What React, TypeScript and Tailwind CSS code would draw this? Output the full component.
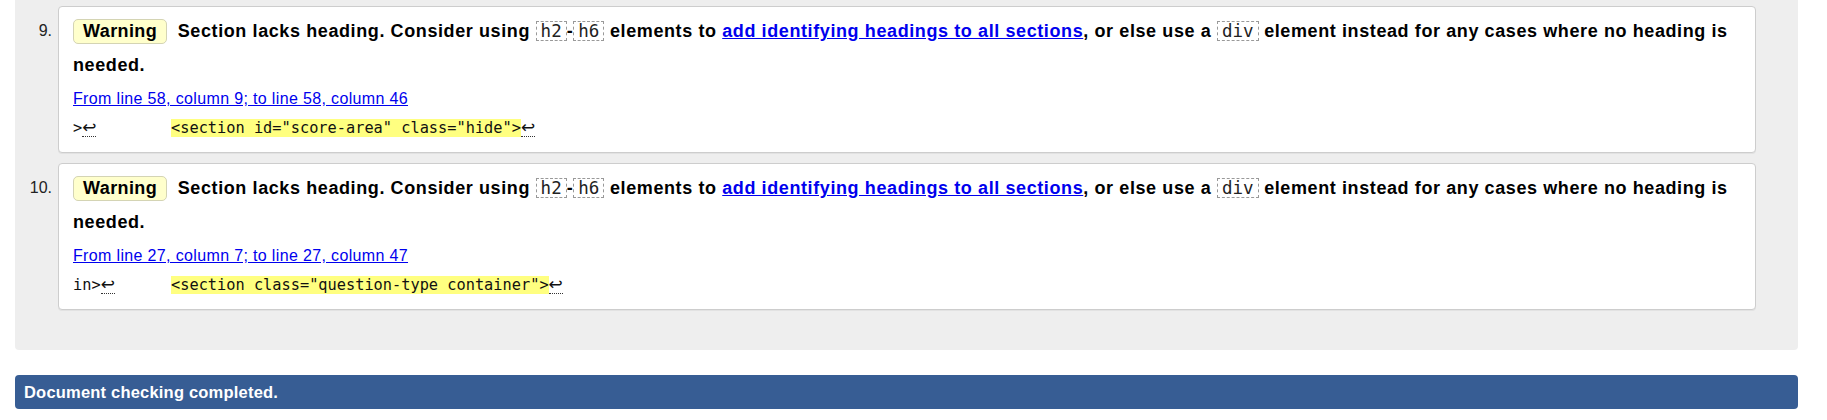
import React from "react";

const sans = { fontFamily: '"Liberation Sans", Arial, sans-serif' };

function Tag({ children }: { children: React.ReactNode }) {
  return (
    <code className="inline-block border border-dashed border-[#999] px-[4px] text-[17.5px] font-normal leading-[18px] tracking-normal text-[#222] [font-family:'DejaVu_Sans_Mono',monospace]">
      {children}
    </code>
  );
}

function Lf() {
  return (
    <span className="inline-block border-b border-dotted border-[#333] text-[17px] leading-[17px] text-[#111] [font-family:'DejaVu_Sans',sans-serif]">
      ↩
    </span>
  );
}

type Msg = {
  n: number;
  range: string;
  prefix: string;
  code: string;
};

const messages: Msg[] = [
  {
    n: 9,
    range: "From line 58, column 9; to line 58, column 46",
    prefix: ">",
    code: '<section id="score-area" class="hide">',
  },
  {
    n: 10,
    range: "From line 27, column 7; to line 27, column 47",
    prefix: "in>",
    code: '<section class="question-type container">',
  },
];

function Message({ m }: { m: Msg }) {
  return (
    <li className="flex">
      <div className="w-[43px] shrink-0 pr-[6px] pt-[8px] text-right text-[16px] leading-[34px] text-[#222]">
        {m.n}.
      </div>
      <div className="flex-1 rounded-[4px] border border-[#cdcdcd] bg-white px-[14px] pb-[14px] pt-[7px] shadow-[0_1px_0_#e2e2e2]">
        <p className="text-[18px] font-bold leading-[34px] tracking-[0.6px] text-black">
          <strong className="mr-[5px] inline-block rounded-[5px] border border-[#d4d4b4] bg-[#ffffcc] px-[9px] leading-[23px] tracking-[0.4px]">
            Warning
          </strong>{" "}
          <span>
            Section lacks heading. Consider using <Tag>h2</Tag>-<Tag>h6</Tag> elements to{" "}
            <a href="#" className="text-[#0000ee] underline">
              add identifying headings to all sections
            </a>
            , or else use a <Tag>div</Tag> element instead for any cases where no heading is needed.
          </span>
        </p>
        <p className="mt-[7px] text-[16px] leading-[20px] tracking-[0.35px]">
          <a href="#" className="text-[#0000ee] underline">
            {m.range}
          </a>
        </p>
        <p className="mt-[10px] flex items-end text-[15.3px] leading-[19px] text-[#111] [font-family:'DejaVu_Sans_Mono',monospace]">
          <span className="w-[98px] shrink-0 whitespace-pre">
            {m.prefix}
            <Lf />
          </span>
          <span className="whitespace-pre">
            <mark className="bg-[#ffff80] text-[#111]">{m.code}</mark>
            <Lf />
          </span>
        </p>
      </div>
    </li>
  );
}

export default function App() {
  return (
    <div className="min-h-[420px] bg-white pl-[15px] pr-[29px]" style={sans}>
      <div className="rounded-b-[4px] bg-[#eeeeee] pb-[40px] pr-[42px] pt-[6px]">
        <ol className="flex flex-col gap-[10px]">
          {messages.map((m) => (
            <Message key={m.n} m={m} />
          ))}
        </ol>
      </div>
      <div className="mt-[25px] h-[34px] rounded-[4px] bg-[#375d94] pl-[9px] text-[16.5px] font-bold leading-[34px] tracking-[0.2px] text-white">
        Document checking completed.
      </div>
    </div>
  );
}
